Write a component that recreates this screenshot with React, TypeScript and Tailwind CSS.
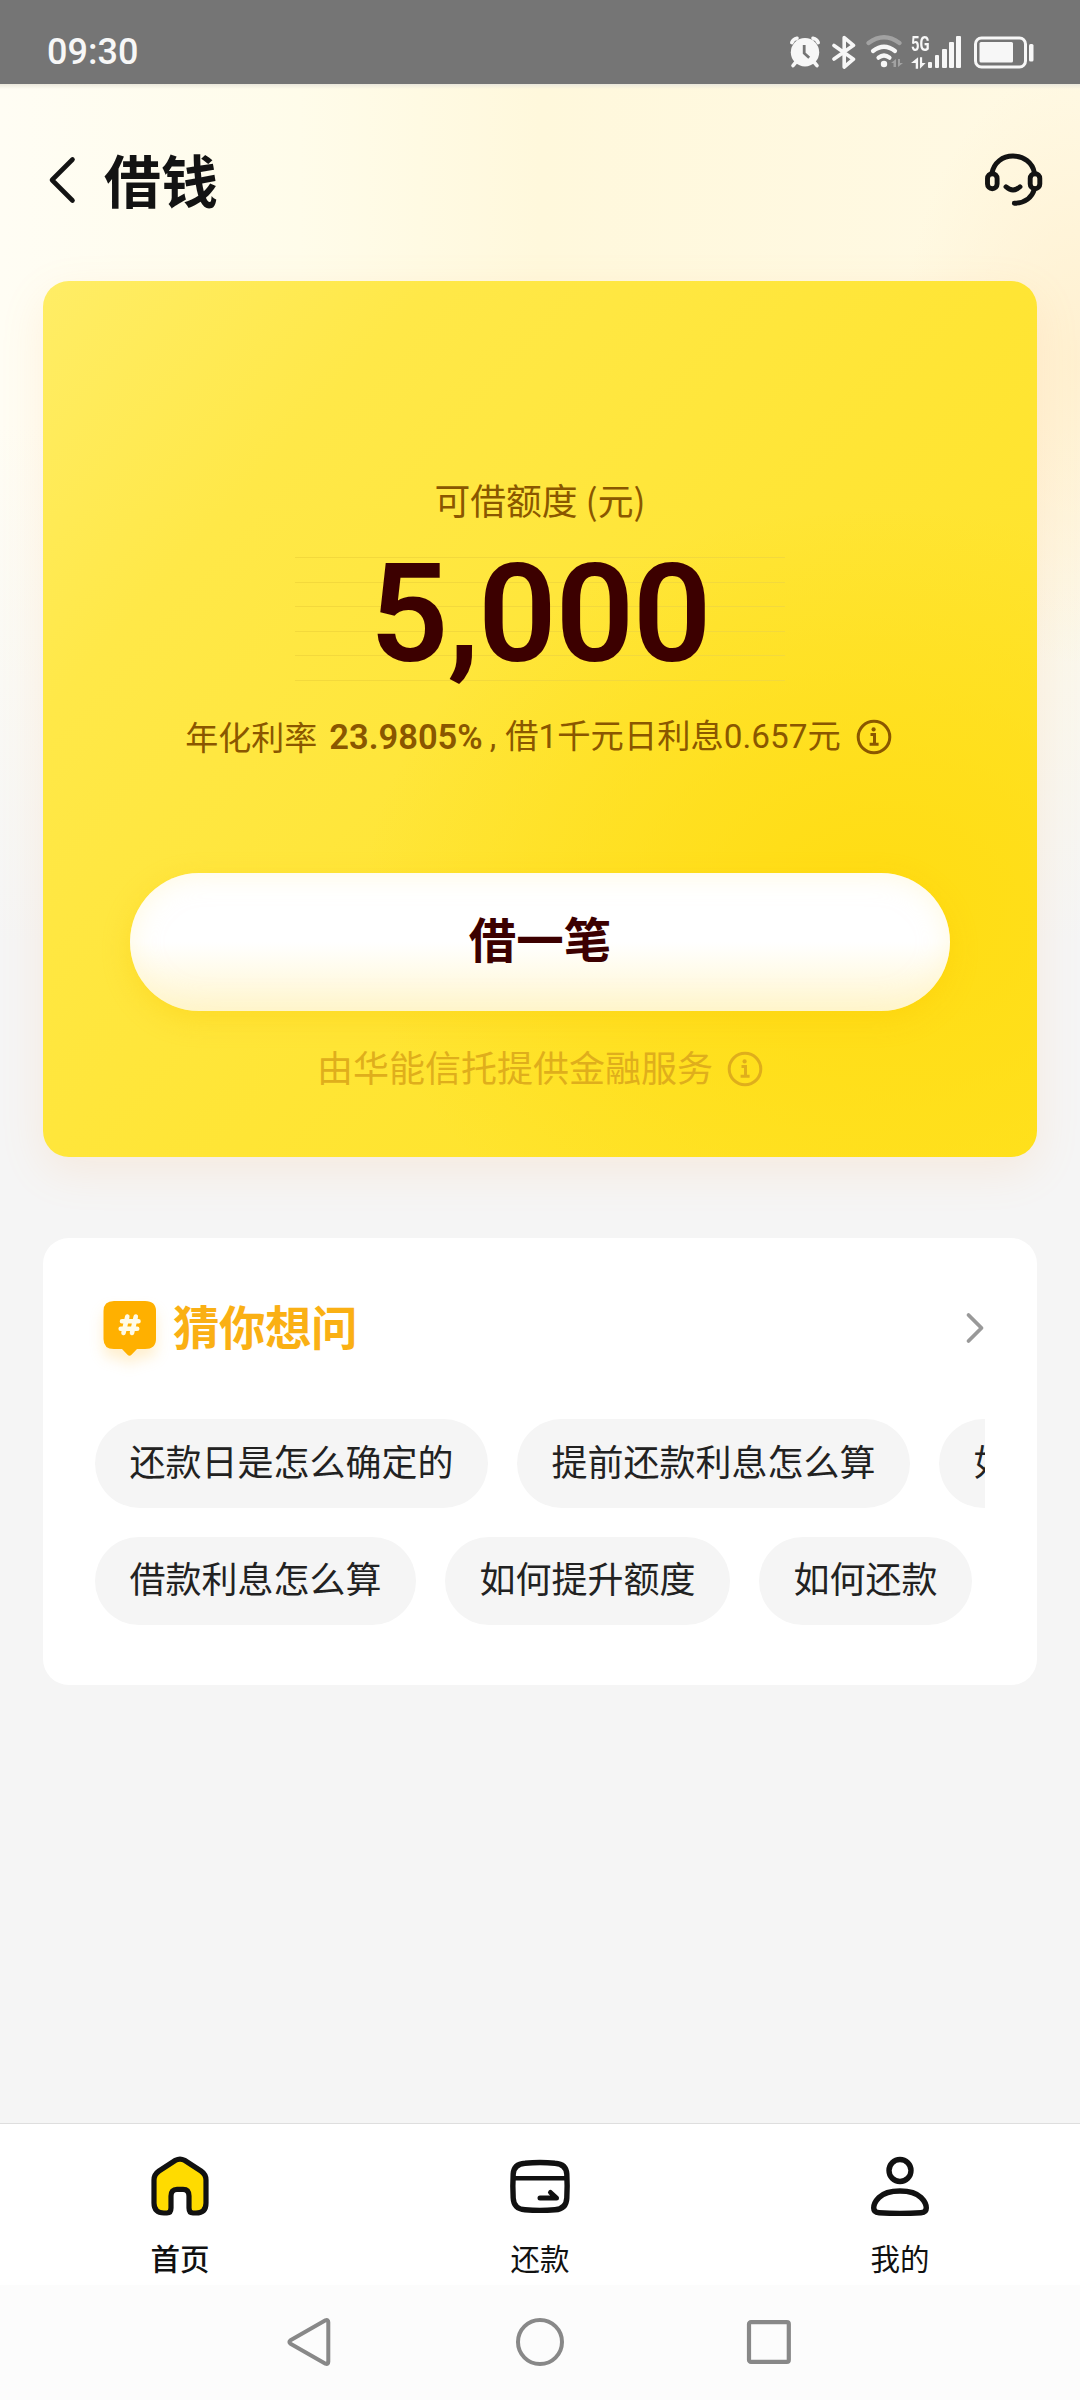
import React from 'react';

const QUESTION_ROWS: string[][] = [
  ['还款日是怎么确定的', '提前还款利息怎么算', '如何还款'],
  ['借款利息怎么算', '如何提升额度', '如何还款'],
];

// height of the signal bars, left to right
const SIGNAL_BARS = [6, 13, 19, 26, 32];

const InfoIcon = ({ className }: { className: string }) => (
  <svg viewBox="0 0 36 36" fill="none" stroke="currentColor" className={className}>
    <circle cx="18" cy="18" r="15.8" strokeWidth="3" />
    <circle cx="17.6" cy="10.4" r="2.1" fill="currentColor" stroke="none" />
    <path d="M14.5 15.4h4v9.4M13.6 25.2h9" strokeWidth="3" />
  </svg>
);

const StatusBar = () => (
  <div className="flex h-[84px] items-start justify-between bg-[#757575] pl-[47px] pr-[45px] text-[#f7f7f7]">
    <span className="mt-[31px] font-[Roboto] text-[36px] font-medium leading-[42px]">09:30</span>
    <div className="mt-[34px] flex h-[36px]">
      {/* alarm */}
      <svg viewBox="0 0 32 36" className="h-[36px] w-[32px]">
        <g fill="none" stroke="currentColor" strokeWidth="3.6" strokeLinecap="round">
          <path d="M2.8 8.6Q4 5 8 4.2M29.2 8.6Q28 5 24 4.2M7 28l-3 3.6M25 28l3 3.6" />
        </g>
        <circle cx="16" cy="18.2" r="14.2" fill="currentColor" />
        <path d="M15.2 11v8.200l5 4.500" fill="none" stroke="#757575" strokeWidth="2.8" />
      </svg>
      {/* bluetooth */}
      <svg viewBox="0 0 24 36" className="ml-[11px] h-[36px] w-[24px]">
        <path
          d="M2 11.500L21.500 25.200L12.200 33V3.600L21.500 11.300L2 25"
          fill="none"
          stroke="currentColor"
          strokeWidth="3.600"
          strokeLinecap="round"
          strokeLinejoin="round"
        />
      </svg>
      {/* wifi */}
      <svg viewBox="0 0 38 36" className="ml-[10px] h-[36px] w-[38px]">
        <g fill="none" stroke="currentColor" strokeWidth="4.2" strokeLinecap="round">
          <path d="M2.500 9Q18 -2.500 33.500 9" opacity="0.35" />
          <path d="M7 17Q18 8.500 29 17" />
          <path d="M12.500 23.700Q18 19.300 23.500 23.700" />
        </g>
        <circle cx="18" cy="30" r="3.200" fill="currentColor" />
        <path d="M30 25v8h-2.500v-4H25zM32 33v-8h2v4h3z" fill="currentColor" opacity="0.35" />
      </svg>
      {/* network type and traffic arrows */}
      <div className="ml-[7px] flex w-[18px] flex-col">
        <span className="mt-[1px] origin-left scale-x-[0.74] font-[Roboto] text-[20px] font-bold leading-[18px]">5G</span>
        <svg viewBox="0 0 18 12" className="mt-[4px] h-[12px] w-[17px]">
          <path d="M7.500 0v12H5V6H0zM9.500 12V0h2.300v6h3.700z" fill="currentColor" />
        </svg>
      </div>
      <div className="-ml-[1px] flex h-[34px] items-end gap-[2.500px]">
        {SIGNAL_BARS.map((height) => (
          <div key={height} className="w-[4.700px] rounded-[1px] bg-[#f7f7f7]" style={{ height }} />
        ))}
      </div>
      {/* battery */}
      <svg viewBox="0 0 61 36" className="ml-[13px] h-[36px] w-[61px]">
        <rect x="1.500" y="4" width="50" height="29" rx="6" fill="none" stroke="currentColor" strokeWidth="3" />
        <rect x="5.500" y="8" width="33.500" height="20.500" rx="1.500" fill="currentColor" />
        <rect x="55" y="10" width="4.500" height="17.500" rx="1.500" fill="currentColor" />
      </svg>
    </div>
  </div>
);

const Header = () => (
  <header className="flex h-[197px] items-start justify-between bg-linear-to-b from-[#ebe8dc] via-transparent via-[5px] pl-[46px] pr-[37px] text-[#131313]">
    <div className="flex items-center pt-[59px]">
      <svg viewBox="0 0 32 52" className="mt-[3px] h-[52px] w-[32px]">
        <path
          d="M26.500 5.500L6 26L26.500 46.500"
          fill="none"
          stroke="currentColor"
          strokeWidth="4.600"
          strokeLinecap="round"
          strokeLinejoin="round"
        />
      </svg>
      <h1 className="ml-[26px] text-[57px] font-bold leading-[70px]">借钱</h1>
    </div>
    <svg
      viewBox="0 0 60 56"
      fill="none"
      stroke="currentColor"
      strokeWidth="4.900"
      strokeLinecap="round"
      className="mt-[68px] h-[56px] w-[60px]"
    >
      <path d="M9 21C11 10.500 19.500 4 30 4S49.500 10.500 51.500 21" />
      <rect x="4.500" y="21.700" width="9.600" height="15" rx="4.800" />
      <rect x="47.200" y="21.700" width="9.600" height="15" rx="4.800" />
      <path d="M23 34.800Q30 41.200 37 34.800" />
      <path d="M51.500 37C49 45.500 42 51.200 31.300 51.200" />
    </svg>
  </header>
);

const LoanCard = () => (
  <section className="mx-[43px] flex h-[876px] flex-col items-center rounded-[26px] bg-[radial-gradient(ellipse_52%_46%_at_84%_72%,#ffdc12_0%,#ffdc1200_100%),linear-gradient(132deg,#ffed66_0%,#ffe848_22%,#ffe535_55%,#ffe220_100%)] pt-[192px] shadow-[0_14px_44px_rgba(255,170,90,0.14)]">
    <p className="h-[52px] text-[35.800px] leading-[52px] text-[#8a5700]">可借额度 (元)</p>

    <div className="mt-[32px] h-[124px] w-[490px] bg-[repeating-linear-gradient(to_bottom,#f3d93c_0,#f3d93c_1px,transparent_1px,transparent_24.600px)] text-center font-[Roboto] text-[138px] font-semibold leading-[114px] tracking-[-1.500px] text-[#3c0000]">
      5,000
    </div>

    <div className="mt-[31px] flex h-[50px] items-center whitespace-nowrap pr-[3px] text-[33px] leading-[50px] text-[#8a5700]">
      <span className="-mt-[3px]">年化利率</span>
      <span className="ml-[12px] font-[Roboto] text-[34.500px] font-semibold">23.9805%</span>
      <span className="ml-[7px] font-[Roboto]">,</span>
      <span className="ml-[9px] font-[Roboto,'Noto_Sans_CJK_SC',sans-serif] text-[33.300px]">借1千元日利息0.657元</span>
      <InfoIcon className="ml-[15px] h-[36px] w-[36px]" />
    </div>

    <button className="mt-[111px] h-[138px] w-[820px] rounded-full bg-linear-to-b from-white from-50% to-[#fff6cf] pb-[8px] text-[47.500px] font-bold text-[#3c0000] shadow-[0_8px_28px_rgba(248,195,0,0.32),inset_0_0_28px_rgba(255,243,190,0.5)]">
      借一笔
    </button>

    <div className="mt-[31px] flex h-[50px] items-center text-[36px] leading-[50px] text-[#dfae1c]">
      <span className="-mt-[2px]">由华能信托提供金融服务</span>
      <InfoIcon className="ml-[14px] mt-[4px] h-[36px] w-[36px]" />
    </div>
  </section>
);

const QuestionCard = () => (
  <section className="mx-[43px] mt-[81px] h-[447px] rounded-[26px] bg-white px-[52px]">
    <div className="flex h-[181px] items-start justify-between pl-[8px]">
      <div className="flex">
        <svg viewBox="0 0 54 60" className="mt-[62px] h-[60px] w-[54px] drop-shadow-[0_9px_7px_rgba(255,180,30,0.22)]">
          <path
            d="M11 1H42Q53 1 53 11V39Q53 49 42 49H34L28.500 54.800Q26.500 56.500 24.500 54.800L19 49H11Q0.500 49 0.500 39V11Q0.500 1 11 1Z"
            fill="#ffb000"
          />
          <path
            d="M24.300 16.500L20.500 33M32.800 16.500L29 33M19 21.300H35.500M17.700 28.700H34.200"
            fill="none"
            stroke="#fffbe8"
            strokeWidth="4.600"
            strokeLinecap="round"
          />
        </svg>
        <h2 className="ml-[16px] mt-[57px] text-[46.500px] font-bold leading-[60px] tracking-[-0.500px] text-[#fab014]">猜你想问</h2>
      </div>
      <svg viewBox="0 0 24 36" className="-mr-[1.500px] mt-[72px] h-[36px] w-[24px]">
        <path
          d="M5.500 5L18.500 18L5.500 31"
          fill="none"
          stroke="#999"
          strokeWidth="3.800"
          strokeLinecap="round"
          strokeLinejoin="round"
        />
      </svg>
    </div>
    <div className="flex flex-col gap-[29px] overflow-hidden">
      {QUESTION_ROWS.map((row, index) => (
        <div key={index} className="flex gap-[29px]">
          {row.map((question) => (
            <button
              key={question}
              className="h-[88.500px] shrink-0 whitespace-nowrap rounded-full bg-[#f5f5f5] px-[34.500px] pb-[7px] text-[36px] text-[#222]"
            >
              {question}
            </button>
          ))}
        </div>
      ))}
    </div>
  </section>
);

const HomeIcon = () => (
  <svg viewBox="0 0 64 64" className="h-[64px] w-[64px]">
    <path
      d="M27.500 6.300Q32 3.800 36.500 6.300L53 17Q58 20.500 58 26V49Q58 59 48 59H45Q41 59 41 54V42Q41 35.300 35 35.300H29Q23 35.300 23 42V54Q23 59 19 59H16Q6 59 6 49V26Q6 20.500 11 17Z"
      fill="#ffdb00"
      stroke="#111"
      strokeWidth="5.200"
      strokeLinejoin="round"
    />
  </svg>
);

const RepayIcon = () => (
  <svg viewBox="0 0 64 64" fill="none" stroke="#111" className="h-[64px] w-[64px]">
    <path d="M17 9.200Q32 7.800 47 9.200Q58.300 10 58.800 20Q59.500 32 58.800 44Q58.300 55 47 55.800Q32 57 17 55.800Q5.700 55 5.200 44Q4.500 32 5.200 20Q5.700 10 17 9.200Z" strokeWidth="5.400" />
    <path d="M6 24.200H58" strokeWidth="4.600" />
    <path d="M32 44H48.500L42.500 38.500" strokeWidth="5" strokeLinecap="round" strokeLinejoin="round" />
    <path d="M43 39l6 5h-6z" fill="#111" />
  </svg>
);

const ProfileIcon = () => (
  <svg viewBox="0 0 64 64" fill="none" stroke="#111" strokeWidth="5.400" className="h-[64px] w-[64px]">
    <circle cx="32" cy="16.500" r="11" />
    <path d="M32 37C42 37 48 38.500 53 43.500C56.500 47 58.300 50.500 58.300 54C58.300 57 56.500 58.500 53 58.700Q32 60 11 58.700C7.500 58.500 5.700 57 5.700 54C5.700 50.500 7.500 47 11 43.500C16 38.500 22 37 32 37Z" />
  </svg>
);

const TABS = [
  { label: '首页', icon: <HomeIcon />, active: true },
  { label: '还款', icon: <RepayIcon />, active: false },
  { label: '我的', icon: <ProfileIcon />, active: false },
];

const TabBar = () => (
  <nav className="grid h-[162px] grid-cols-3 border-t border-[#dedede] bg-white">
    {TABS.map((tab) => (
      <div key={tab.label} className="flex flex-col items-center pt-[30px]">
        {tab.icon}
        <span
          className={`mt-[17px] text-[29.500px] leading-[44px] text-[#111] ${tab.active ? 'font-medium' : 'font-normal'}`}
        >
          {tab.label}
        </span>
      </div>
    ))}
  </nav>
);

const SystemNav = () => (
  <div className="flex h-[115px] items-center justify-center gap-[180px] bg-[#fcfcfc] pb-[2px]">
    <svg viewBox="0 0 48 52" fill="none" stroke="#888" strokeWidth="4" strokeLinejoin="round" className="h-[52px] w-[48px]">
      <path d="M4.500 24.200L39.500 4.300Q42.300 3.300 42.300 6.300V45.700Q42.300 48.700 39.500 47.700L4.500 27.800Q2.300 26 4.500 24.200Z" />
    </svg>
    <svg viewBox="0 0 52 52" fill="none" stroke="#888" strokeWidth="4" className="h-[52px] w-[52px]">
      <circle cx="26" cy="26" r="22" />
    </svg>
    <svg viewBox="0 0 48 52" fill="none" stroke="#888" strokeWidth="4.200" className="h-[52px] w-[48px]">
      <rect x="3" y="6.100" width="39.800" height="39.800" rx="2" />
    </svg>
  </div>
);

export default function App() {
  return (
    <div className="flex h-[2400px] w-[1080px] flex-col overflow-hidden bg-[#f5f5f5] font-['Noto_Sans_CJK_SC',sans-serif]">
      <StatusBar />
      <main className="flex-1 bg-[radial-gradient(ellipse_180px_300px_at_1080px_280px,#fff0d0_0%,#fff0d000_100%),linear-gradient(to_bottom,#f5f5f500_0,#f5f5f500_340px,#f5f5f5_860px),linear-gradient(to_right,#fffdf4_0,#fffcea_300px,#fff8dc_540px,#fff9e4_1080px)]">
        <Header />
        <LoanCard />
        <QuestionCard />
      </main>
      <TabBar />
      <SystemNav />
    </div>
  );
}
